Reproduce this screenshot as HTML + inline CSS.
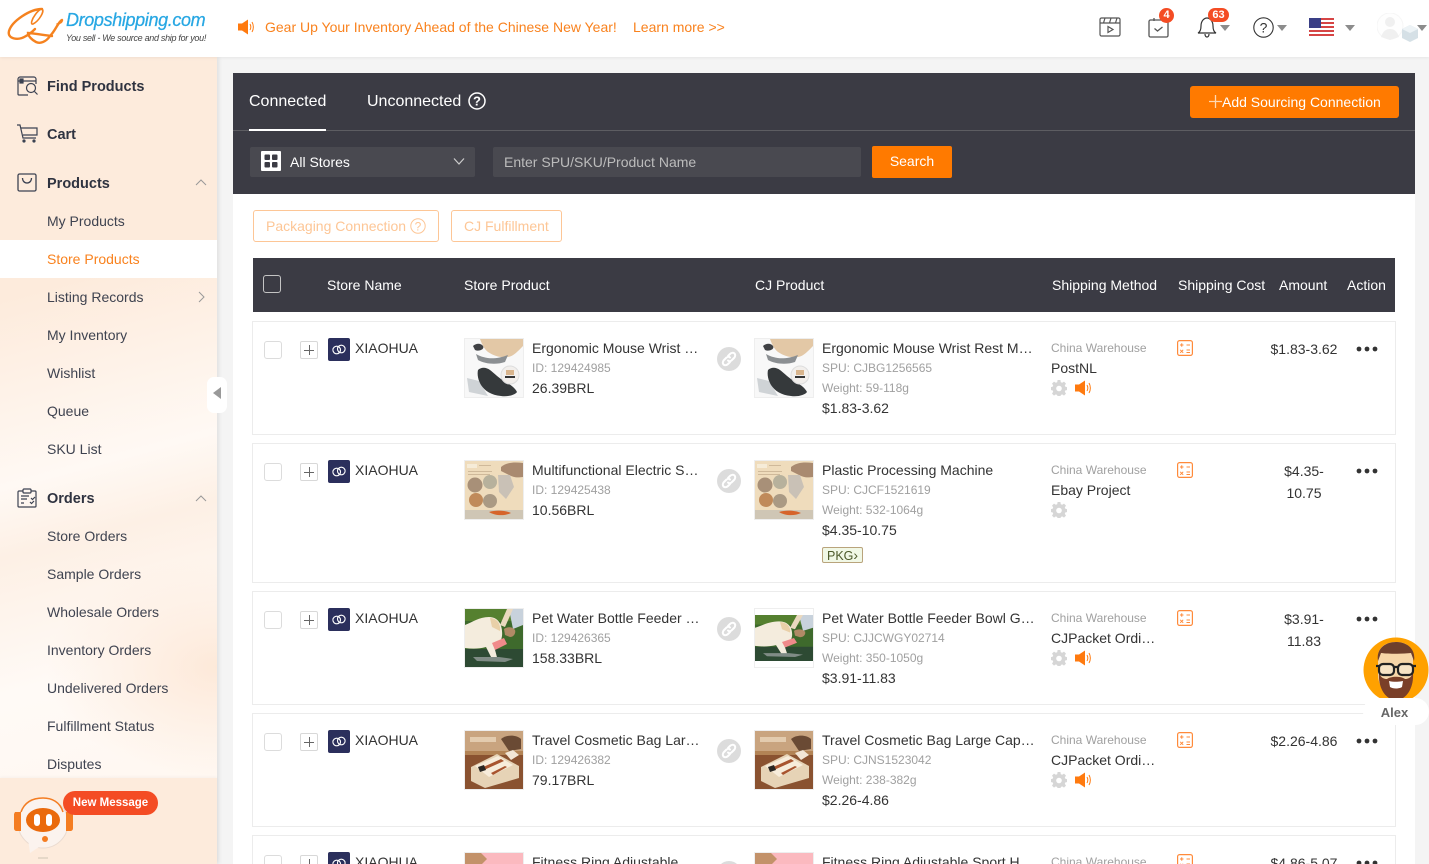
<!DOCTYPE html>
<html><head><meta charset="utf-8"><title>Store Products</title>
<style>
*{box-sizing:border-box}
html,body{margin:0;padding:0;width:1429px;height:864px;overflow:hidden;background:#f4f4f4;font-family:"Liberation Sans",Arial,sans-serif;color:#333}
#page{position:relative;width:1429px;height:864px;overflow:hidden;background:#f4f4f4}
.a{position:absolute}
.t{position:absolute;white-space:nowrap;line-height:20px;font-size:14px}
#hd{position:absolute;left:0;top:0;width:1429px;height:57px;background:#fff;box-shadow:0 1px 3px rgba(0,0,0,.06);z-index:5}
#sb{position:absolute;left:0;top:57px;width:217px;height:807px;box-shadow:2px 0 4px rgba(0,0,0,.08);
background:radial-gradient(ellipse 170px 110px at 100% 610px,#fde9d9 0,rgba(253,233,217,0) 100%),linear-gradient(165deg,#fdebdc 0,#fdebdc 28%,#fff9f4 50%,#fdf0e5 58%,#fffaf6 74%,#fff6ee 100%)}
.m{position:absolute;left:47px;font-size:14px;line-height:20px;color:#3f4350;white-space:nowrap}
.b{font-weight:bold;font-size:14.5px;color:#2f3340;left:47px}
#main{position:absolute;left:233px;top:73px;width:1182px;height:791px;background:#fff}
.row{position:absolute;left:252px;width:1144px;background:#fff;border:1px solid #ececec}
.row>*{margin:-1px 0 0 -1px}
.cb{position:absolute;left:12px;top:20px;width:18px;height:18px;border:1px solid #dcdcdc;border-radius:3px;background:#fff}
.pl{position:absolute;left:48px;top:20px;width:18px;height:18px;border:1px solid #d8d8d8;border-radius:2px;color:#555}
.pl:before{content:"";position:absolute;left:3px;top:7.5px;width:10px;height:1px;background:#666}
.pl:after{content:"";position:absolute;left:7.5px;top:3px;width:1px;height:10px;background:#666}
.si{position:absolute;left:76px;top:17px;width:22px;height:23px;background:#2b2f5c;border-radius:2px}
.img{position:absolute;top:17px;width:60px;height:60px;border:1px solid #eee;overflow:hidden;background:#fff}
.img svg{display:block;width:58px;height:58px}
.i1{left:212px}.i2{left:502px}
.nm{left:103px;top:17px;color:#333}
.x1{left:280px}.x2{left:570px}.x3{left:799px}
.ty1{top:17px}.ty2{top:37px;color:#a0a0a0;font-size:12px}.ty3{top:57px}.ty4{top:77px}
.g{color:#a0a0a0;font-size:12px}
.lk{position:absolute;left:465px;top:26px;width:24px;height:24px}
.gear{position:absolute;left:799px;top:59px;width:16px;height:16px}
.spk{position:absolute;left:823px;top:59px;width:18px;height:16px}
.calc{position:absolute;left:925px;top:19px;width:16px;height:16px}
.am{position:absolute;left:1002px;width:100px;top:17px;text-align:center;font-size:14px;line-height:22px;color:#333}
.dots{position:absolute;left:1104px;top:25px;width:22px;height:6px}
.hh{position:absolute;top:277px;color:#fff;font-size:14px;line-height:16px;white-space:nowrap;z-index:2}
</style></head><body>
<div id="page">

<svg width="0" height="0" style="position:absolute">
<defs>
<symbol id="gear" viewBox="0 0 16 16"><path fill="#d6d6d6" d="M6.6 0h2.8l.4 2.2 1.4.6L13 1.6l2 2-1.2 1.8.6 1.4 2.2.4v2.800l-2.200.4-.6 1.400 1.200 1.800-2 2-1.800-1.200-1.400.6-.4 2.200H6.600l-.4-2.200-1.400-.6L3 15.600l-2-2 1.200-1.800-.6-1.400L-.6 10V7.200l2.200-.4.6-1.400L1 3.600l2-2 1.800 1.200 1.400-.6z"/><circle cx="8" cy="8.500" r="2.800" fill="#fff"/></symbol>
<symbol id="spk" viewBox="0 0 18 16"><path fill="#ff7a0f" d="M0 4.500h4L10 .5v15l-6-4H0z"/><path fill="none" stroke="#ff7a0f" d="M12 5c1 1.800 1 4.200 0 6M14 3c1.800 3 1.800 7 0 10"/></symbol>
<symbol id="calc" viewBox="0 0 16 16"><rect x=".6" y=".6" width="14.800" height="14.800" rx="2" fill="#fff" stroke="#ff8a3a" stroke-width="1.200"/><path stroke="#ff8a3a" fill="none" d="M3 5h3.500M4.750 3.200v3.500M9.500 5H13M3.200 9.800l3 3M6.200 9.800l-3 3M9.500 10H13M9.500 12.500H13"/></symbol>
<symbol id="lk" viewBox="0 0 24 24"><circle cx="12" cy="12" r="12" fill="#dcdcdc"/><path fill="none" stroke="#fff" stroke-width="2" stroke-linecap="round" d="M11 9l2-2c1.500-1.500 3.500-1.500 4.500-.5s1 3-.5 4.500l-2.500 2.500c-1.200 1-2.700 1-3.500 0M13 15l-2 2c-1.500 1.500-3.500 1.500-4.500.5s-1-3 .5-4.500l2.500-2.500c1.200-1 2.700-1 3.500 0"/></symbol>
<symbol id="store" viewBox="0 0 22 23"><circle cx="8.700" cy="12" r="3.800" fill="none" stroke="#fff" stroke-width="1.100"/><circle cx="13.300" cy="11" r="3.800" fill="none" stroke="#fff" stroke-width="1.100"/></symbol>
<symbol id="dots" viewBox="0 0 22 6"><circle cx="3" cy="3" r="2.400" fill="#333"/><circle cx="11" cy="3" r="2.400" fill="#333"/><circle cx="19" cy="3" r="2.400" fill="#333"/></symbol>
<symbol id="p1" viewBox="0 0 58 58"><rect width="58" height="58" fill="#f8f8f8"/><path fill="#e3c8a6" d="M15 0h43v7c-5 5-9 10-15 11-7 1-14-1-20-5C19 10 17 5 15 0z"/><path fill="#8b8f92" d="M11 15c9 5 19 6 32 1l-3 7c-9 3-20 2-27-2z"/><path fill="#3f4144" d="M8 7c3-3 8-3 10 0s-4 6-8 4z"/><path fill="#cfd3d6" d="M2 39l12 3 9 15-19-4z"/><path fill="#35393b" d="M13 31c3-3 8-3 12 0 5 4 10 9 17 13 4 2 8 5 10 9-2 3-9 5-16 4-10-1-16-5-20-11-3-5-4-11-3-15z"/><circle cx="45" cy="36" r="9" fill="#f2efec" stroke="#ddd"/><rect x="41" y="31" width="8" height="5" fill="#d8b48c"/><rect x="40" y="37" width="10" height="2" fill="#333"/></symbol>
<symbol id="p2" viewBox="0 0 58 58"><rect width="58" height="58" fill="#efdcbc"/><path fill="#f6ecd8" d="M2 3h10v4H2z"/><path fill="#cfb99a" d="M14 4h12v1H14zM3 10h24v1H3zM3 13h22v1H3z"/><path fill="#a98a70" d="M36 6c6-5 14-5 22-4v14c-7 1-10 0-14-2l-8-4z"/><path fill="#c9c1b6" d="M33 14h12l4 12-8 12-7-7z"/><circle cx="10" cy="24" r="7.500" fill="#a89078"/><circle cx="25" cy="21" r="7" fill="#b7b19c"/><circle cx="11" cy="39" r="7" fill="#c08a5a"/><circle cx="25" cy="40" r="7" fill="#aa9a84"/><path fill="#cfc6b5" d="M0 49h58v9H0z"/><path fill="#d6632a" d="M24 51c6-2 16-2 22 1-6 3-16 3-22-1z"/></symbol>
<symbol id="p3" viewBox="0 0 58 58"><rect width="58" height="58" fill="#3e6a2c"/><rect width="58" height="12" fill="#55802f"/><path fill="#c8d2dc" d="M44 0h14v16l-10 4z"/><path fill="#ead9bf" d="M42 0l6 0-8 18-5-2z"/><path fill="#2d4a33" d="M0 40h58v18H0z"/><path fill="#f4ecdd" d="M0 16c8-3 14-8 24-8 10 0 14 9 13 19-1 7-4 9-8 10l4 15h-5l-7-14c-7 2-14 2-21 1z"/><path fill="#e9d0a8" d="M25 9c6 0 11 5 10 13l-8-4z"/><path fill="#f08a8a" d="M27 34l12-5 3 6-12 6z"/><path fill="#b08a66" d="M39 20c4-3 9-2 11 1 1 3-1 7-5 7l-5-2z"/><path fill="#808c86" d="M8 48l26 0 14 2-8 3-28-1z"/></symbol>
<symbol id="p4" viewBox="0 0 58 58"><rect width="58" height="58" fill="#b28355"/><rect width="58" height="20" fill="#c9a47f"/><path fill="#8a5230" d="M0 24h58v34H0z"/><path fill="#e6d3b6" d="M6 36l26-13 22 12v12L20 57 6 50z"/><path fill="#f7ecdb" d="M10 35l23-10 15 9-24 12z"/><path fill="#a8542f" d="M16 37l20-9 3 2-20 9zM26 42l14-7 2 1-14 8z"/><path fill="#292623" d="M13 36l6-2 2 5-6 2z"/><path fill="#6a4a34" d="M36 8c6-5 16-4 20 0v10l-12 2z"/><path fill="#f2e6d6" d="M40 22l8-3 6 5-8 5z"/><rect x="5" y="6" width="26" height="5" fill="#eedcc2" opacity=".7"/></symbol>
<symbol id="p5" viewBox="0 0 58 58"><rect width="58" height="58" fill="#fbb9bf"/><path fill="#c3926a" d="M0 0h16l6 6-8 8H0z"/></symbol>
</defs>
</svg>

<!-- HEADER -->
<div id="hd">
<svg class="a" style="left:0;top:0" width="66" height="50" viewBox="0 0 66 50" fill="none" stroke="#f5821f" stroke-linecap="round"><path stroke-width="2.400" d="M42 9C30 9 12 21 9 31c-2 8 9 10 17 5 4-2 7-5 9-7"/><path stroke-width="1.600" d="M42 9c3 2-3 12-9 15-3 1-1-5 2-9 2-3 5-6 7-6z"/><path stroke-width="2.400" d="M62 20c-4 2-6 10-12 16-4 6-10 8-14 6-4-2-8-6-8-9 4 0 14 2 24 3"/><path stroke-width="1.400" d="M62 20c1 2-2 4-5 4"/></svg>
<div class="t" style="left:66px;top:10px;font-size:18px;font-style:italic;color:#27a7e3;letter-spacing:-.36px;-webkit-text-stroke:.25px #27a7e3">Dropshipping.com</div>
<div class="t" style="left:66px;top:28px;font-size:9px;font-style:italic;color:#444;letter-spacing:-.3px">You sell - We source and ship for you!</div>
<svg class="a" style="left:236px;top:19px" width="22" height="16" viewBox="0 0 18 16"><use href="#spk"/></svg>
<div class="t" style="left:265px;top:17px;color:#f9821e">Gear Up Your Inventory Ahead of the Chinese New Year!</div>
<div class="t" style="left:633px;top:17px;color:#f9821e">Learn more &gt;&gt;</div>

<svg class="a" style="left:1099px;top:16px" width="23" height="22" viewBox="0 0 23 22" fill="none" stroke="#555" stroke-width="1.200"><rect x="1" y="2" width="20" height="18" rx="1.500"/><path d="M1 7h20M6 2l-1.500 5M12 2l-1.500 5M18 2l-1.500 5"/><path d="M9 10.500l5 3-5 3z"/></svg>
<svg class="a" style="left:1148px;top:17px" width="21" height="21" viewBox="0 0 21 21" fill="none" stroke="#555" stroke-width="1.300"><rect x="1" y="3" width="19" height="17" rx="1.500"/><path d="M6 1v3M15 1v3M6.500 11.500l3 2.500 5-4"/></svg>
<div class="a" style="left:1159px;top:8px;width:15px;height:15px;border-radius:50%;background:#f44c24;color:#fff;font-size:11px;font-weight:bold;line-height:15px;text-align:center">4</div>
<svg class="a" style="left:1197px;top:15px" width="20" height="23" viewBox="0 0 20 23" fill="none" stroke="#333" stroke-width="1.200"><path d="M1 18c2-1 3-3 3-7 0-5 3-8 6-8s6 3 6 8c0 4 1 6 3 7zM8 19c0 2 1 3 2 3s2-1 2-3"/></svg>
<div class="a" style="left:1208px;top:8px;width:21px;height:14px;border-radius:7px;background:#f44c24;color:#fff;font-size:11px;font-weight:bold;line-height:14px;text-align:center">63</div>
<div class="a" style="left:1220px;top:25px;border:5px solid transparent;border-top:6px solid #8c8c8c"></div>
<svg class="a" style="left:1253px;top:17px" width="21" height="21" viewBox="0 0 21 21"><circle cx="10.500" cy="10.500" r="9.700" fill="none" stroke="#333" stroke-width="1.100"/><text x="10.500" y="15.500" text-anchor="middle" font-family="Liberation Sans" font-size="14" fill="#333">?</text></svg>
<div class="a" style="left:1277px;top:25px;border:5px solid transparent;border-top:6px solid #8c8c8c"></div>
<svg class="a" style="left:1309px;top:18px" width="25" height="18" viewBox="0 0 25 18"><rect width="25" height="18" fill="#fff"/><path fill="#d64545" d="M0 0h25v2H0zM0 4h25v2H0zM0 8h25v2H0zM0 12h25v2H0zM0 16h25v2H0z"/><rect width="12" height="10" fill="#3a3f86"/></svg>
<div class="a" style="left:1345px;top:25px;border:5px solid transparent;border-top:6px solid #8c8c8c"></div>
<svg class="a" style="left:1377px;top:13px" width="42" height="30" viewBox="0 0 42 30"><circle cx="13" cy="13" r="13" fill="#fefefe" stroke="#f6f6f6"/><circle cx="13" cy="9" r="5" fill="#f0f0f0"/><path fill="#f0f0f0" d="M4 24c2-6 5-8 9-8s7 2 9 8l-9 3z"/><path fill="#d5e0e6" d="M33 12l8 4v9l-8 4-8-4v-9z"/><path fill="#edf3f6" d="M33 12l8 4-8 4-8-4z"/></svg>
<div class="a" style="left:1417px;top:25px;border:5px solid transparent;border-top:6px solid #8c8c8c"></div>
</div>

<!-- SIDEBAR -->
<div id="sb"></div>
<div class="a" style="left:0;top:240px;width:217px;height:38px;background:#fff"></div>
<svg class="a" style="left:17px;top:76px" width="21" height="20" viewBox="0 0 21 20" fill="none" stroke="#3c4252" stroke-width="1.200"><path d="M1 5V3c0-1 1-2 2-2h14c1 0 2 1 2 2v5M1 5h18M1 5v13c0 .6.500 1 1 1h9"/><rect x="3" y="3" width="3" height="4" fill="#3c4252"/><circle cx="14" cy="12" r="4.500"/><path d="M17.500 15.500l3 3"/></svg>
<div class="m b" style="top:77px">Find Products</div>
<svg class="a" style="left:17px;top:124px" width="21" height="19" viewBox="0 0 21 19" fill="none" stroke="#3c4252" stroke-width="1.200"><path d="M0 1h3l3 13h13"/><path d="M4 4h16v7H6"/><circle cx="7" cy="17" r="1" fill="#3c4252"/><circle cx="17" cy="17" r="1" fill="#3c4252"/></svg>
<div class="m b" style="top:125px">Cart</div>
<svg class="a" style="left:17px;top:173px" width="20" height="19" viewBox="0 0 20 19" fill="none" stroke="#3c4252" stroke-width="1.300"><rect x="1" y="1" width="18" height="17" rx="1.500"/><path d="M5.500 5c0 3 2 5 4.500 5s4.500-2 4.500-5"/></svg>
<div class="m b" style="top:174px">Products</div>
<svg class="a" style="left:195px;top:178px" width="12" height="8" viewBox="0 0 12 8" fill="none" stroke="#999"><path d="M1 7l5-5 5 5"/></svg>
<div class="m" style="top:211px">My Products</div>
<div class="m" style="top:249px;color:#f9821e">Store Products</div>
<div class="m" style="top:287px">Listing Records</div>
<svg class="a" style="left:198px;top:291px" width="8" height="12" viewBox="0 0 8 12" fill="none" stroke="#999"><path d="M1 1l5 5-5 5"/></svg>
<div class="m" style="top:325px">My Inventory</div>
<div class="m" style="top:363px">Wishlist</div>
<div class="m" style="top:401px">Queue</div>
<div class="m" style="top:439px">SKU List</div>
<svg class="a" style="left:17px;top:488px" width="20" height="20" viewBox="0 0 20 20" fill="none" stroke="#3c4252" stroke-width="1.200"><path d="M6 3H2c-.5 0-1 .500-1 1v14c0 .6.500 1 1 1h16c.5 0 1-.4 1-1V4c0-.5-.5-1-1-1h-4"/><rect x="6" y="1" width="8" height="4" rx="1"/><path d="M4 8h8M4 11h6M4 15h3M14 10l1.500 1.500L18 9M13 14l1.500 1.500L17 13"/></svg>
<div class="m b" style="top:489px">Orders</div>
<svg class="a" style="left:195px;top:494px" width="12" height="8" viewBox="0 0 12 8" fill="none" stroke="#999"><path d="M1 7l5-5 5 5"/></svg>
<div class="m" style="top:526px">Store Orders</div>
<div class="m" style="top:564px">Sample Orders</div>
<div class="m" style="top:602px">Wholesale Orders</div>
<div class="m" style="top:640px">Inventory Orders</div>
<div class="m" style="top:678px">Undelivered Orders</div>
<div class="m" style="top:716px">Fulfillment Status</div>
<div class="m" style="top:754px">Disputes</div>
<div class="a" style="left:0;top:778px;width:217px;height:86px;background:#fdebdc;box-shadow:0 -1px 3px rgba(0,0,0,.04)"></div>
<svg class="a" style="left:12px;top:795px" width="62" height="66" viewBox="0 0 62 66"><circle cx="31" cy="28" r="25" fill="#fbf3ee" stroke="#eadbd0"/><path fill="#fbf3ee" d="M16 44l2 14 12-8z"/><path fill="#f47d22" d="M3 17h6v19H5c-2 0-3-1-3-3V19zM54 17h6l1 2v14c0 2-1 3-3 3h-4z"/><path fill="none" stroke="#f47d22" stroke-width="1.500" d="M9 17C13 6 22 3 31 3s17 4 20 14"/><ellipse cx="31" cy="25" rx="17" ry="12" fill="#ea6a0c"/><rect x="22" y="19" width="6" height="12" rx="3" fill="#fff"/><rect x="34" y="19" width="6" height="12" rx="3" fill="#fff"/><circle cx="33" cy="44" r="3" fill="#f47d22"/><rect x="26" y="62" width="10" height="2" fill="#e6d8c8"/></svg>
<div class="a" style="left:63px;top:791px;width:95px;height:24px;background:#f44c24;border-radius:12px;color:#fff;font-size:11.500px;font-weight:bold;line-height:24px;text-align:center">New Message</div>
<div class="a" style="left:207px;top:377px;width:20px;height:36px;background:#fff;border-radius:7px;z-index:3"></div>
<div class="a" style="left:213px;top:387px;border-style:solid;border-color:transparent #999 transparent transparent;border-width:6.500px 8px 6.500px 0;z-index:4"></div>

<!-- MAIN -->
<div id="main"></div>
<div class="a" style="left:233px;top:73px;width:1182px;height:121px;background:#3b3b44"></div>
<div class="a" style="left:233px;top:130px;width:1182px;height:1px;background:#5d5d62"></div>
<div class="a" style="left:249px;top:129px;width:77px;height:2px;background:#fff"></div>
<div class="t" style="left:249px;top:92px;font-size:16px;color:#fff">Connected</div>
<div class="t" style="left:367px;top:92px;font-size:16px;color:#fff">Unconnected</div>
<svg class="a" style="left:468px;top:92px" width="18" height="18" viewBox="0 0 18 18"><circle cx="9" cy="9" r="8" fill="none" stroke="#fff" stroke-width="1.500"/><text x="9" y="13.500" text-anchor="middle" font-family="Liberation Sans" font-size="13" font-weight="bold" fill="#fff">?</text></svg>
<div class="a" style="left:1190px;top:86px;width:209px;height:32px;background:#ff7a00;border-radius:3px"></div>
<svg class="a" style="left:1209px;top:95px" width="13" height="13"><path d="M0 6.500h13M6.500 0v13" stroke="#ffd9b3" stroke-width="1.300"/></svg>
<div class="t" style="left:1222px;top:92px;color:#fff">Add Sourcing Connection</div>
<div class="a" style="left:250px;top:147px;width:225px;height:30px;background:#494950;border-radius:2px"></div>
<svg class="a" style="left:261px;top:151px" width="20" height="20" viewBox="0 0 20 20"><rect width="20" height="20" rx="1" fill="#fff"/><rect x="3.500" y="3.500" width="5.500" height="5.500" rx="1" fill="#3b3b44"/><rect x="11" y="3.500" width="5.500" height="5.500" rx="1" fill="#3b3b44"/><rect x="3.500" y="11" width="5.500" height="5.500" rx="1" fill="#3b3b44"/><rect x="11" y="11" width="5.500" height="5.500" rx="1" fill="#3b3b44"/></svg>
<div class="t" style="left:290px;top:152px;color:#fff">All Stores</div>
<svg class="a" style="left:453px;top:157px" width="12" height="9" viewBox="0 0 12 9" fill="none" stroke="#ccc" stroke-width="1.200"><path d="M1 1.500l5 5.500 5-5.500"/></svg>
<div class="a" style="left:493px;top:147px;width:368px;height:30px;background:#494950;border-radius:2px"></div>
<div class="t" style="left:504px;top:152px;color:#bcbcbc">Enter SPU/SKU/Product Name</div>
<div class="a" style="left:872px;top:146px;width:80px;height:32px;background:#ff7a00;border-radius:2px;color:#fff;font-size:14px;line-height:31px;text-align:center">Search</div>

<div class="a" style="left:253px;top:210px;width:186px;height:32px;border:1px solid #fdc696;border-radius:3px"></div>
<div class="t" style="left:266px;top:216px;color:#fdc696">Packaging Connection</div>
<svg class="a" style="left:410px;top:218px" width="16" height="16" viewBox="0 0 16 16"><circle cx="8" cy="8" r="7.200" fill="none" stroke="#fdc696"/><text x="8" y="12.300" text-anchor="middle" font-family="Liberation Sans" font-size="12" fill="#fdc696">?</text></svg>
<div class="a" style="left:451px;top:210px;width:111px;height:32px;border:1px solid #fdc696;border-radius:3px"></div>
<div class="t" style="left:464px;top:216px;color:#fdc696">CJ Fulfillment</div>

<div class="a" style="left:253px;top:258px;width:1142px;height:54px;background:#3b3b44"></div>
<div class="a" style="left:263px;top:275px;width:18px;height:18px;border:1.500px solid #c4c4c4;border-radius:3px;z-index:2"></div>
<div class="hh" style="left:327px">Store Name</div>
<div class="hh" style="left:464px">Store Product</div>
<div class="hh" style="left:755px">CJ Product</div>
<div class="hh" style="left:1052px">Shipping Method</div>
<div class="hh" style="left:1178px">Shipping Cost</div>
<div class="hh" style="left:1279px">Amount</div>
<div class="hh" style="left:1347px">Action</div>

<!-- ROW 1 -->
<div class="row" style="top:321px;height:114px">
<div class="cb"></div><div class="pl"></div><svg class="si"><use href="#store"/></svg>
<div class="t nm">XIAOHUA</div>
<div class="img i1"><svg viewBox="0 0 58 58"><use href="#p1"/></svg></div>
<div class="t x1 ty1">Ergonomic Mouse Wrist …</div><div class="t x1 ty2">ID: 129424985</div><div class="t x1 ty3">26.39BRL</div>
<svg class="lk"><use href="#lk"/></svg>
<div class="img i2"><svg viewBox="0 0 58 58"><use href="#p1"/></svg></div>
<div class="t x2 ty1">Ergonomic Mouse Wrist Rest M…</div><div class="t x2 ty2">SPU: CJBG1256565</div><div class="t x2 ty3 g">Weight: 59-118g</div><div class="t x2 ty4">$1.83-3.62</div>
<div class="t x3 ty1 g">China Warehouse</div><div class="t x3 ty2" style="color:#333;font-size:14px">PostNL</div>
<svg class="gear"><use href="#gear"/></svg><svg class="spk"><use href="#spk"/></svg>
<svg class="calc"><use href="#calc"/></svg>
<div class="am">$1.83-3.62</div><svg class="dots"><use href="#dots"/></svg>
</div>

<!-- ROW 2 -->
<div class="row" style="top:443px;height:140px">
<div class="cb"></div><div class="pl"></div><svg class="si"><use href="#store"/></svg>
<div class="t nm">XIAOHUA</div>
<div class="img i1"><svg viewBox="0 0 58 58"><use href="#p2"/></svg></div>
<div class="t x1 ty1">Multifunctional Electric S…</div><div class="t x1 ty2">ID: 129425438</div><div class="t x1 ty3">10.56BRL</div>
<svg class="lk"><use href="#lk"/></svg>
<div class="img i2"><svg viewBox="0 0 58 58"><use href="#p2"/></svg></div>
<div class="t x2 ty1">Plastic Processing Machine</div><div class="t x2 ty2">SPU: CJCF1521619</div><div class="t x2 ty3 g">Weight: 532-1064g</div><div class="t x2 ty4">$4.35-10.75</div>
<div class="a" style="left:570px;top:104px;width:41px;height:16px;border:1px solid #b9a47c;background:#f1f8e6;border-radius:2px;color:#4d5a2a;font-size:12.500px;line-height:14px;padding-left:4px;white-space:nowrap">PKG<span style="font-size:14px">&#8250;</span></div>
<div class="t x3 ty1 g">China Warehouse</div><div class="t x3 ty2" style="color:#333;font-size:14px">Ebay Project</div>
<svg class="gear"><use href="#gear"/></svg>
<svg class="calc"><use href="#calc"/></svg>
<div class="am">$4.35-<br>10.75</div><svg class="dots"><use href="#dots"/></svg>
</div>

<!-- ROW 3 -->
<div class="row" style="top:591px;height:114px">
<div class="cb"></div><div class="pl"></div><svg class="si"><use href="#store"/></svg>
<div class="t nm">XIAOHUA</div>
<div class="img i1"><svg viewBox="0 0 58 58"><use href="#p3"/></svg></div>
<div class="t x1 ty1">Pet Water Bottle Feeder …</div><div class="t x1 ty2">ID: 129426365</div><div class="t x1 ty3">158.33BRL</div>
<svg class="lk"><use href="#lk"/></svg>
<div class="img i2"><svg viewBox="0 0 58 58" preserveAspectRatio="none" style="height:46px;margin-top:6px"><use href="#p3"/></svg></div>
<div class="t x2 ty1">Pet Water Bottle Feeder Bowl G…</div><div class="t x2 ty2">SPU: CJJCWGY02714</div><div class="t x2 ty3 g">Weight: 350-1050g</div><div class="t x2 ty4">$3.91-11.83</div>
<div class="t x3 ty1 g">China Warehouse</div><div class="t x3 ty2" style="color:#333;font-size:14px">CJPacket Ordi…</div>
<svg class="gear"><use href="#gear"/></svg><svg class="spk"><use href="#spk"/></svg>
<svg class="calc"><use href="#calc"/></svg>
<div class="am">$3.91-<br>11.83</div><svg class="dots"><use href="#dots"/></svg>
</div>

<!-- ROW 4 -->
<div class="row" style="top:713px;height:114px">
<div class="cb"></div><div class="pl"></div><svg class="si"><use href="#store"/></svg>
<div class="t nm">XIAOHUA</div>
<div class="img i1"><svg viewBox="0 0 58 58"><use href="#p4"/></svg></div>
<div class="t x1 ty1">Travel Cosmetic Bag Lar…</div><div class="t x1 ty2">ID: 129426382</div><div class="t x1 ty3">79.17BRL</div>
<svg class="lk"><use href="#lk"/></svg>
<div class="img i2"><svg viewBox="0 0 58 58"><use href="#p4"/></svg></div>
<div class="t x2 ty1">Travel Cosmetic Bag Large Cap…</div><div class="t x2 ty2">SPU: CJNS1523042</div><div class="t x2 ty3 g">Weight: 238-382g</div><div class="t x2 ty4">$2.26-4.86</div>
<div class="t x3 ty1 g">China Warehouse</div><div class="t x3 ty2" style="color:#333;font-size:14px">CJPacket Ordi…</div>
<svg class="gear"><use href="#gear"/></svg><svg class="spk"><use href="#spk"/></svg>
<svg class="calc"><use href="#calc"/></svg>
<div class="am">$2.26-4.86</div><svg class="dots"><use href="#dots"/></svg>
</div>

<!-- ROW 5 -->
<div class="row" style="top:835px;height:29px;overflow:hidden;border-bottom:0">
<div class="cb"></div><div class="pl"></div><svg class="si"><use href="#store"/></svg>
<div class="t nm">XIAOHUA</div>
<div class="img i1"><svg viewBox="0 0 58 58"><use href="#p5"/></svg></div>
<div class="t x1 ty1">Fitness Ring Adjustable</div>
<svg class="lk"><use href="#lk"/></svg>
<div class="img i2"><svg viewBox="0 0 58 58"><use href="#p5"/></svg></div>
<div class="t x2 ty1">Fitness Ring Adjustable Sport H…</div>
<div class="t x3 ty1 g">China Warehouse</div>
<svg class="calc"><use href="#calc"/></svg>
<div class="am">$4.86-5.07</div><svg class="dots"><use href="#dots"/></svg>
</div>

<!-- ALEX -->
<svg class="a" style="left:1363px;top:637px;z-index:6" width="66" height="66" viewBox="0 0 66 66"><circle cx="33" cy="33" r="32.500" fill="#ffa100"/><path fill="#f7d6a8" d="M15 20c0-10 8-15 18-15s17 5 17 15v18c0 12-8 20-17 20s-18-8-18-20z"/><path fill="#6e3f2c" d="M15 24c-2-12 7-19 18-19s20 7 18 19l-3-8c-8 1-22 1-30 0z"/><path fill="#7a3f28" d="M16 36c2 5 5 6 8 6 4-3 14-3 18 0 3 0 6-1 8-6 1 14-6 27-17 27S15 50 16 36z"/><rect x="16" y="27" width="15" height="11" rx="4" fill="#f7e3c4" stroke="#222" stroke-width="2.200"/><rect x="35" y="27" width="15" height="11" rx="4" fill="#f7e3c4" stroke="#222" stroke-width="2.200"/><path stroke="#222" stroke-width="2.200" d="M31 30h4M13 29h3M50 29h3"/><path fill="#fff" d="M26 44c4 1 10 1 14 0l-1 6c-3 2-9 2-12 0z"/></svg>
<div class="a" style="left:1363px;top:698px;width:66px;height:27px;background:#fff;border-radius:14px;color:#666;font-size:13px;font-weight:bold;line-height:30px;text-align:center;padding-right:3px;z-index:7">Alex</div>

</div>
</body></html>
